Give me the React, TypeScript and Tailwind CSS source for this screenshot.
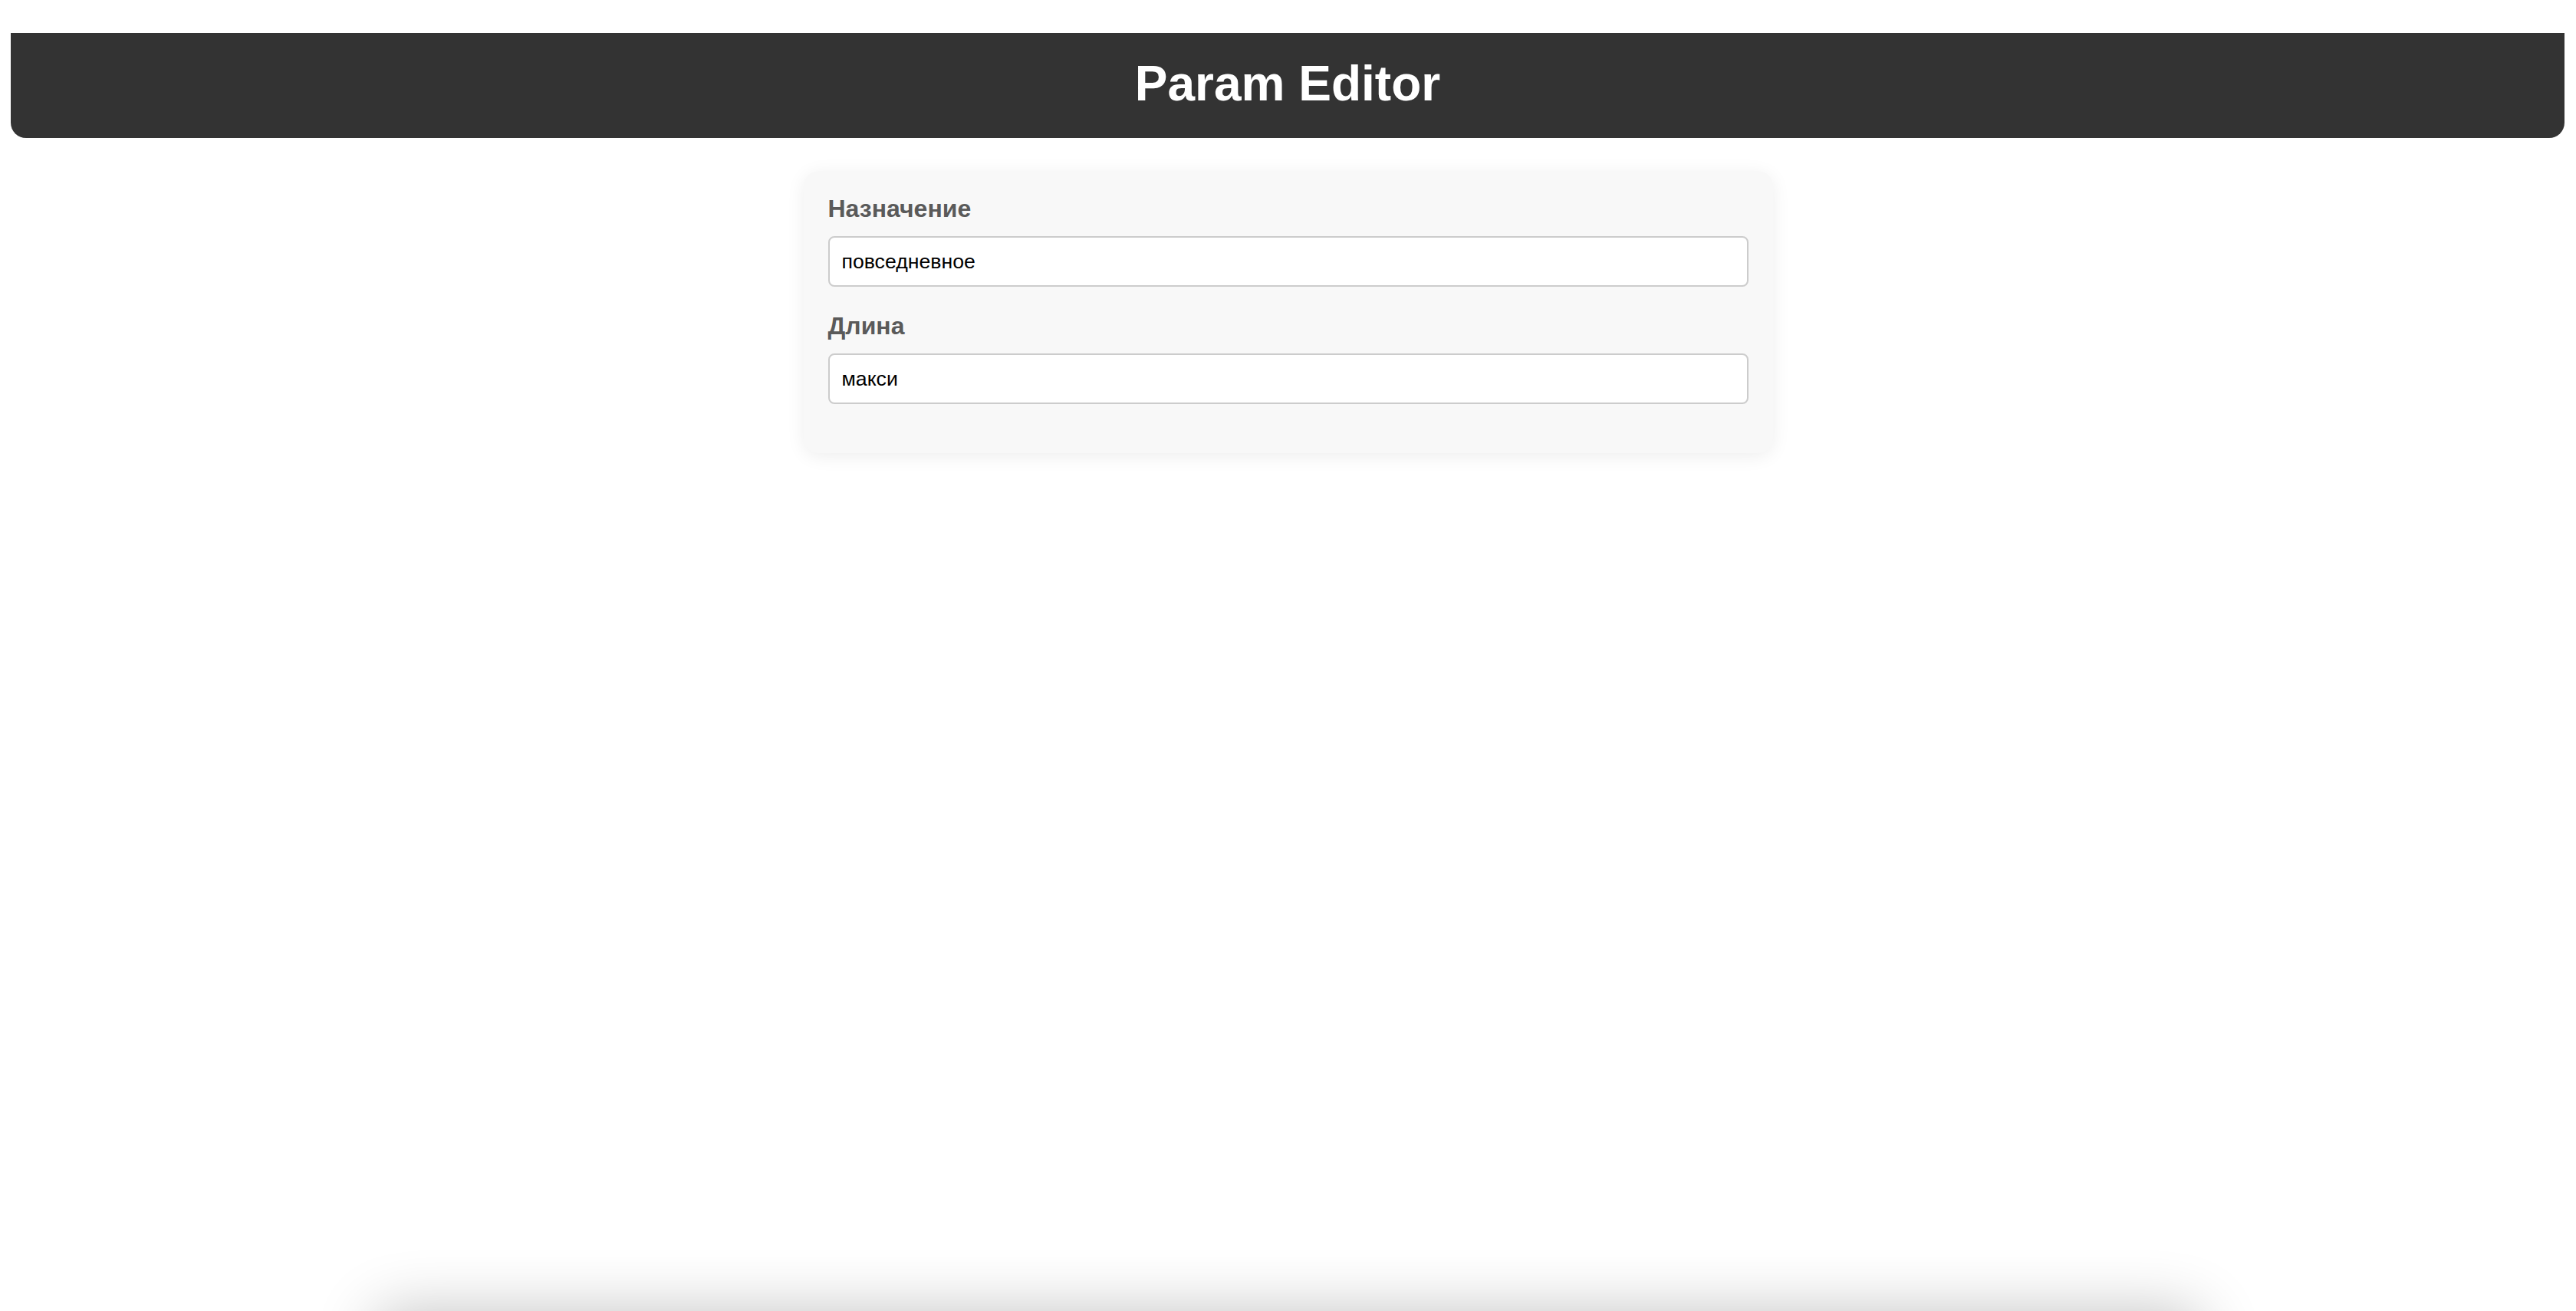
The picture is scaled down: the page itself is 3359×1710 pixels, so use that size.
import { useState } from "react";

const fields = [
  { id: "purpose", label: "Назначение", value: "повседневное" },
  { id: "length", label: "Длина", value: "макси" },
];

export default function App() {
  const [values, setValues] = useState<Record<string, string>>(
    Object.fromEntries(fields.map((f) => [f.id, f.value]))
  );

  return (
    <div className="min-h-screen bg-white pt-[43px] font-['Liberation_Sans',Arial,sans-serif] overflow-hidden">
      <header className="ml-[14px] mr-[15px] h-[137px] flex items-center justify-center pb-[5px] bg-[#333333] rounded-b-[20px]">
        <h1 className="text-[64px] font-bold leading-[74px] text-white">
          Param Editor
        </h1>
      </header>

      <div className="mt-[43px] mx-auto w-[1264px] bg-[#f8f8f8] rounded-[20px] px-[32px] pt-[31px] pb-[31px] shadow-[0_4px_24px_rgba(0,0,0,0.07)]">
        {fields.map((field) => (
          <div key={field.id} className="mb-[33px]">
            <label
              htmlFor={field.id}
              className="block text-[32px] font-bold leading-[36px] text-[#5a5a5a] mb-[18px]"
            >
              {field.label}
            </label>
            <input
              id={field.id}
              value={values[field.id]}
              onChange={(e) =>
                setValues({ ...values, [field.id]: e.target.value })
              }
              className="block w-full h-[66px] px-[16px] bg-white border-2 border-[#cccccc] rounded-[8px] text-[26.67px] text-black outline-none"
            />
          </div>
        ))}
      </div>

      {/* bottom sheet parked just below the viewport, only its shadow shows */}
      <div className="fixed left-0 right-0 bottom-0 translate-y-full mx-auto w-[2380px] h-[300px] bg-white rounded-t-[24px] shadow-[0_0_80px_rgba(0,0,0,0.24)]" />
    </div>
  );
}
